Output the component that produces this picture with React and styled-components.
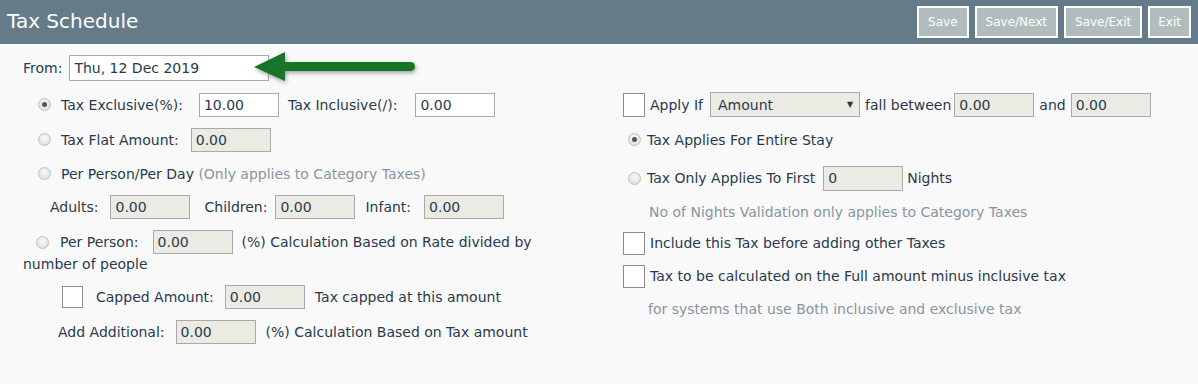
import React from "react";
import styled, { createGlobalStyle } from "styled-components";

const GlobalStyle = createGlobalStyle`
    html, body {
        margin: 0;
        padding: 0;
        background: #f9f9f9;
    }
    body {
        font-family: "DejaVu Sans", Verdana, sans-serif;
        font-size: 14px;
        color: #283a4d;
    }
`

const Header = styled.div`
    align-items: center;
    background-color: #657b89;
    display: flex;
    height: 44px;
    justify-content: space-between;
    padding: 0 7px;
`
const Title = styled.h1`
    color: #ffffff;
    font-size: 20px;
    font-weight: normal;
    margin: 0 0 3px 0;
`
const Toolbar = styled.div`
    display: flex;
    gap: 6px;
`
const ToolButton = styled.button`
    background-color: #b1bcbc;
    border: 2px solid #ffffff;
    color: #ffffff;
    font-family: "DejaVu Sans", Verdana, sans-serif;
    font-size: 12px;
    height: 32px;
    padding: 0 ${p => p.$pad || 9}px;
`
const FromRow = styled.div`
    align-items: center;
    display: flex;
    gap: 7px;
    height: 26px;
    margin: 11px 0 6px 23px;
    position: relative;
`
const Arrow = styled.svg`
    filter: drop-shadow(1px 2px 2px rgba(0, 0, 0, 0.35));
    left: 204px;
    position: absolute;
    top: -7px;
`
const Columns = styled.div`
    display: flex;
`
const Column = styled.div`
    display: flex;
    flex-direction: column;
    padding-left: 23px;
    width: ${p => p.$width}px;
`
const Row = styled.div`
    align-items: center;
    display: flex;
    gap: ${p => p.$gap ?? 10}px;
    height: ${p => p.$h}px;
    margin-top: ${p => p.$mt || 0}px;
    padding-left: ${p => p.$indent || 0}px;
`
const Text = styled.span`
    color: ${p => (p.$muted ? "#8795a1" : "#283a4d")};
    margin-left: ${p => p.$ml || 0}px;
    white-space: nowrap;
`
const Input = styled.input`
    background-color: ${p => (p.disabled ? "#ebebe4" : "#ffffff")};
    border: 1px solid #a9a9a9;
    box-sizing: border-box;
    color: #283a4d;
    flex: none;
    font-family: "DejaVu Sans", Verdana, sans-serif;
    font-size: 14px;
    height: ${p => p.$h || 24}px;
    margin-left: ${p => p.$ml || 0}px;
    padding: 0 4px;
    width: ${p => p.$w || 80}px;
`
const Radio = styled.span`
    background: radial-gradient(circle at 50% 40%, #fafafa 0%, #e2e2e2 70%, #cfcfcf 100%);
    border: 1px solid #c2c2c2;
    border-radius: 50%;
    box-sizing: border-box;
    display: inline-block;
    flex: none;
    height: 13px;
    position: relative;
    width: 13px;
    &::after {
        background: #555555;
        border-radius: 50%;
        content: "";
        display: ${p => (p.$checked ? "block" : "none")};
        height: 5px;
        left: 3px;
        position: absolute;
        top: 3px;
        width: 5px;
    }
`
const Checkbox = styled.span`
    background: #ffffff;
    border: 1px solid #8c8c8c;
    box-sizing: border-box;
    display: inline-block;
    flex: none;
    height: ${p => p.$h || 24}px;
    width: ${p => p.$w || 22}px;
`
const Select = styled.div`
    align-items: center;
    background-color: #ebebe4;
    border: 1px solid #a9a9a9;
    box-sizing: border-box;
    display: flex;
    flex: none;
    height: 25px;
    justify-content: space-between;
    margin-left: 2px;
    padding: 0 6px 0 7px;
    width: 150px;
    &::after {
        color: #333333;
        content: "▼";
        font-size: 8px;
    }
`

function App() {
    return (
        <>
            <GlobalStyle />
            <Header>
                <Title>Tax Schedule</Title>
                <Toolbar>
                    <ToolButton $pad={9}>Save</ToolButton>
                    <ToolButton $pad={9}>Save/Next</ToolButton>
                    <ToolButton $pad={9}>Save/Exit</ToolButton>
                    <ToolButton $pad={8}>Exit</ToolButton>
                </Toolbar>
            </Header>

            <FromRow>
                <Text>From:</Text>
                <Input $w={200} $h={26} defaultValue="Thu, 12 Dec 2019" />
                <Arrow width="195" height="42" viewBox="0 0 195 42">
                    <line x1="55" y1="18.5" x2="183.5" y2="18.5" stroke="#177527" strokeWidth="9" strokeLinecap="round" />
                    <polygon points="27,19 58,4 58,33" fill="#177527" />
                </Arrow>
            </FromRow>

            <Columns>
                <Column $width={577}>
                    <Row $h={35} $indent={15}>
                        <Radio $checked />
                        <Text>Tax Exclusive(%):</Text>
                        <Input $ml={6} defaultValue="10.00" />
                        <Text $ml={-1}>Tax Inclusive(/):</Text>
                        <Input $ml={8} defaultValue="0.00" />
                    </Row>
                    <Row $h={35} $indent={15}>
                        <Radio />
                        <Text>Tax Flat Amount:</Text>
                        <Input $ml={2} disabled defaultValue="0.00" />
                    </Row>
                    <Row $h={33} $indent={15}>
                        <Radio />
                        <Text>
                            Per Person/Per Day <Text $muted>(Only applies to Category Taxes)</Text>
                        </Text>
                    </Row>
                    <Row $h={33} $indent={27}>
                        <Text>Adults:</Text>
                        <Input $ml={2} disabled defaultValue="0.00" />
                        <Text $ml={4}>Children:</Text>
                        <Input $ml={-2} disabled defaultValue="0.00" />
                        <Text>Infant:</Text>
                        <Input $ml={3} disabled defaultValue="0.00" />
                    </Row>
                    <Row $h={22} $mt={8} $indent={13} $gap={11}>
                        <Radio />
                        <Text>Per Person:</Text>
                        <Input $ml={3} disabled defaultValue="0.00" />
                        <Text $ml={-2}>(%) Calculation Based on Rate divided by</Text>
                    </Row>
                    <Row $h={22}>
                        <Text>number of people</Text>
                    </Row>
                    <Row $h={44} $indent={39}>
                        <Checkbox $w={21} $h={22} />
                        <Text $ml={3}>Capped Amount:</Text>
                        <Input disabled $ml={1} defaultValue="0.00" />
                        <Text>Tax capped at this amount</Text>
                    </Row>
                    <Row $h={26} $indent={35}>
                        <Text>Add Additional:</Text>
                        <Input disabled $ml={1} defaultValue="0.00" />
                        <Text>(%) Calculation Based on Tax amount</Text>
                    </Row>
                </Column>

                <Column $width={575}>
                    <Row $h={35} $gap={5}>
                        <Checkbox />
                        <Text>Apply If</Text>
                        <Select>Amount</Select>
                        <Text>fall between</Text>
                        <Input disabled $ml={-2} defaultValue="0.00" />
                        <Text>and</Text>
                        <Input disabled defaultValue="0.00" />
                    </Row>
                    <Row $h={35} $indent={5} $gap={6}>
                        <Radio $checked />
                        <Text>Tax Applies For Entire Stay</Text>
                    </Row>
                    <Row $h={42} $indent={5} $gap={6}>
                        <Radio />
                        <Text>Tax Only Applies To First</Text>
                        <Input disabled $h={25} $ml={2} defaultValue="0" />
                        <Text $ml={-2}>Nights</Text>
                    </Row>
                    <Row $h={26} $indent={26}>
                        <Text $muted>No of Nights Validation only applies to Category Taxes</Text>
                    </Row>
                    <Row $h={36} $gap={5}>
                        <Checkbox $h={23} />
                        <Text>Include this Tax before adding other Taxes</Text>
                    </Row>
                    <Row $h={30} $gap={5}>
                        <Checkbox $h={23} />
                        <Text>Tax to be calculated on the Full amount minus inclusive tax</Text>
                    </Row>
                    <Row $h={36} $indent={25}>
                        <Text $muted>for systems that use Both inclusive and exclusive tax</Text>
                    </Row>
                </Column>
            </Columns>
        </>
    );
}

export default App;
